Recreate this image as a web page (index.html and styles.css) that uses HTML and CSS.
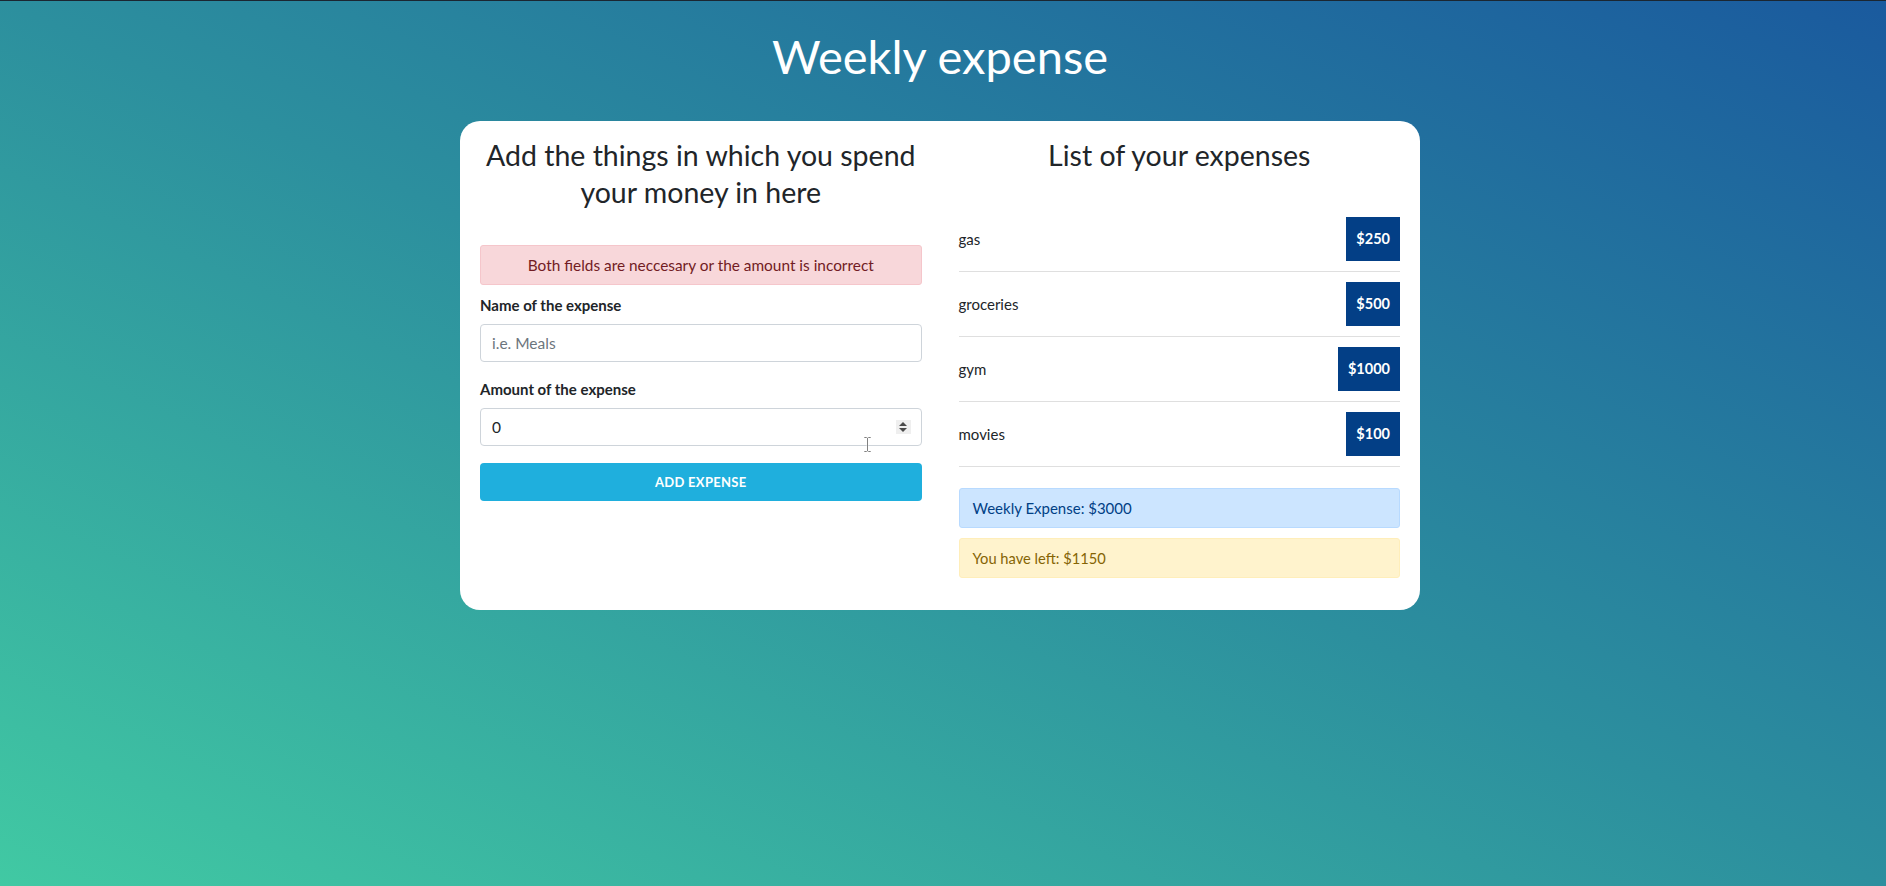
FILE: index.html
```html
<!DOCTYPE html>
<html lang="en">
<head>
<meta charset="utf-8">
<title>Weekly expense</title>
<link rel="stylesheet" href="styles.css">
</head>
<body>
  <header class="page-header">
    <h1 class="page-title">Weekly expense</h1>
  </header>
  <main class="card">
    <section class="col">
      <h2 class="col-title">Add the things in which you spend your money in here</h2>
      <div class="alert alert-danger">Both fields are neccesary or the amount is incorrect</div>
      <form class="form">
        <div class="form-group">
          <label class="label" for="name">Name of the expense</label>
          <input class="input" id="name" type="text" placeholder="i.e. Meals">
        </div>
        <div class="form-group">
          <label class="label" for="amount">Amount of the expense</label>
          <div class="input-wrap">
            <input class="input" id="amount" type="text" value="0">
            <span class="spinner">
              <svg width="8" height="10" viewBox="0 0 8 10"><path d="M4 0 L8 4 L0 4 Z M0 6 L8 6 L4 10 Z" fill="#4a4a4a"/></svg>
            </span>
            <svg class="cursor" width="9" height="17" viewBox="0 0 9 17"><path d="M1 1 H3.5 L4.5 2 L5.5 1 H8 V2 H5 V15 H8 V16 H5.5 L4.5 15 L3.5 16 H1 V15 H4 V2 H1 Z" fill="#000" stroke="#fff" stroke-width="0.6"/></svg>
          </div>
        </div>
        <button class="btn" type="button">Add expense</button>
      </form>
    </section>
    <section class="col">
      <h2 class="col-title">List of your expenses</h2>
      <ul class="list">
        <li class="list-item"><span class="item-name">gas</span><span class="badge">$250</span></li>
        <li class="list-item"><span class="item-name">groceries</span><span class="badge">$500</span></li>
        <li class="list-item"><span class="item-name">gym</span><span class="badge">$1000</span></li>
        <li class="list-item"><span class="item-name">movies</span><span class="badge">$100</span></li>
      </ul>
      <div class="alert alert-info">Weekly Expense: $3000</div>
      <div class="alert alert-warning">You have left: $1150</div>
    </section>
  </main>
</body>
</html>
```
FILE: styles.css
```css
* { box-sizing: border-box; }

html, body { height: 100%; }

body {
  margin: 0;
  padding-right: 6px;
  min-height: 100vh;
  border-top: 1px solid #1b2631;
  background: linear-gradient(to top right, #41c9a3 0%, #2c8f9e 50%, #1a5a9e 100%);
  font-family: "Lato", "Noto Sans", sans-serif;
  color: #212529;
}

.page-header {
  padding-top: 25px;
  padding-bottom: 35px;
  text-align: center;
}

.page-title {
  margin: 0;
  font-size: 47px;
  line-height: 60px;
  font-weight: 400;
  color: #fff;
}

.card {
  width: 960px;
  margin: 0 auto;
  background: #fff;
  border-radius: 20px;
  padding: 16px 20px 32px;
  display: flex;
  gap: 37px;
  align-items: flex-start;
}

.col {
  flex: 1 1 0;
  min-width: 0;
}

.col-title {
  margin: 0;
  font-size: 28.5px;
  line-height: 37px;
  font-weight: 400;
  text-align: center;
  color: #212529;
}

.alert {
  border: 1px solid transparent;
  border-radius: 3px;
  padding: 10px 13px;
  font-size: 14px;
  line-height: 18px;
}

.alert-danger {
  margin-top: 34px;
  text-align: center;
  background: #f8d7da;
  border-color: #f5c6cb;
  color: #721c24;
  font-size: 15.4px;
}

.alert-info {
  margin-top: 21px;
  background: #cce5ff;
  border-color: #b8daff;
  color: #004085;
  font-size: 15px;
}

.alert-warning {
  margin-top: 10px;
  background: #fff3cd;
  border-color: #ffeeba;
  color: #856404;
  font-size: 14.7px;
}

.form { margin-top: 10px; }

.form-group { margin-bottom: 17px; }

.label {
  display: block;
  margin-bottom: 8px;
  font-size: 15px;
  line-height: 21px;
  font-weight: 700;
  color: #212529;
}

.input-wrap { position: relative; }

.input {
  display: block;
  width: 100%;
  height: 38px;
  padding: 6px 11px;
  border: 1px solid #ced4da;
  border-radius: 4px;
  font-family: inherit;
  font-size: 15.5px;
  color: #212529;
  background: #fff;
}

.input::placeholder { color: #6c757d; }

.spinner {
  position: absolute;
  right: 11px;
  top: 12px;
  width: 15px;
  height: 14px;
  background: #efefef;
  display: flex;
  align-items: center;
  justify-content: center;
}

.cursor {
  position: absolute;
  left: 383px;
  top: 28px;
}

.btn {
  display: block;
  width: 100%;
  height: 38px;
  border: 0;
  border-radius: 4px;
  background: #1fafdd;
  color: #fff;
  font-family: inherit;
  font-size: 13px;
  font-weight: 700;
  text-transform: uppercase;
  letter-spacing: 0.3px;
}

.list {
  list-style: none;
  margin: 33px 0 0;
  padding: 0;
}

.list-item {
  display: flex;
  justify-content: space-between;
  align-items: center;
  padding: 10px 0;
  border-bottom: 1px solid #dfdfdf;
}

.item-name {
  font-size: 15px;
  color: #212529;
}

.badge {
  height: 44px;
  line-height: 44px;
  padding: 0 10px;
  background: #033f86;
  color: #fff;
  font-size: 14.5px;
  font-weight: 700;
}
```
